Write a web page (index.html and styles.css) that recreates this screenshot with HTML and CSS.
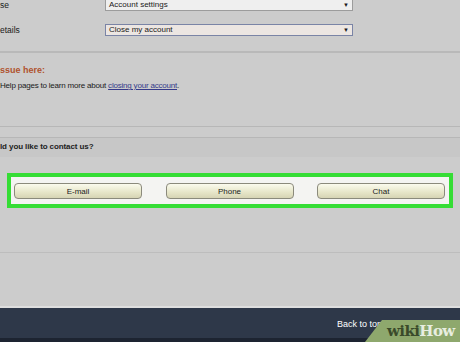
FILE: index.html
```html
<!DOCTYPE html>
<html>
  <head>
    <link rel="stylesheet" href="styles.css">
  </head>

  <body>
    <div class="fields">
      <div class="fieldrow first">
        <div class="fieldlabel">se</div>
        <div class="selectbox">Account settings<span class="arrow">&#9660;</span></div>
      </div>
      <div class="fieldrow">
        <div class="fieldlabel">etails</div>
        <div class="selectbox focused">Close my account<span class="arrow">&#9660;</span></div>
      </div>
    </div>

    <div class="divider"></div>

    <div class="helpbox">
      <div class="helptitle">ssue here:</div>
      <div class="helptext">Help pages to learn more about <a href="#" class="helplink">closing your account</a>.</div>
    </div>

    <div class="contact">
      <div class="contactbar">ld you like to contact us?</div>
    </div>

    <div class="choices">
      <button class="choicebtn">E-mail</button>
      <button class="choicebtn">Phone</button>
      <button class="choicebtn">Chat</button>
    </div>

    <div class="bottomline"></div>

    <div class="footer">
      <span class="backtotop">Back to top</span>
      <div class="wikilogo"><span class="wiki">wiki</span><span class="how">How</span></div>
    </div>
  </body>
</html>
```

FILE: styles.css
```css
body {
  font-family: "Liberation Sans", Arial, sans-serif;
  font-size: 8.5px;
  color: #1a1a1a;
  margin: 0;
  background-color: #cccccc;
  height: 342px;
  overflow: hidden;
  display: flex;
  flex-direction: column;
}

.fields {
  display: flex;
  flex-direction: column;
  gap: 13px;
}

.fieldrow {
  display: flex;
  align-items: center;
  height: 12px;
}

.fieldrow.first {
  margin-top: -1px;
}

.fieldlabel {
  width: 105px;
}

.selectbox {
  box-sizing: border-box;
  width: 248px;
  height: 12px;
  line-height: 10px;
  padding-left: 3px;
  font-size: 8px;
  background-color: #efefef;
  border: 1px solid #9c9c9c;
  display: flex;
  justify-content: space-between;
}

.selectbox.focused {
  border-color: #7a84a6;
  background-color: #ece6e2;
}

.arrow {
  font-size: 6px;
  padding-right: 3px;
}

.divider {
  margin-top: 15px;
  height: 2px;
  background-color: #b9b9b9;
}

.helpbox {
  margin-top: 11px;
}

.helptitle {
  color: #b0522e;
  font-weight: 700;
  font-size: 9px;
  line-height: 12px;
}

.helptext {
  margin-top: 4px;
  line-height: 12px;
  font-size: 8px;
  letter-spacing: -0.2px;
}

.helplink {
  color: #353a8a;
}

.contact {
  margin-top: 34px;
  border-top: 1px solid #b7b7b7;
  padding-top: 10px;
}

.contactbar {
  border-top: 1px solid #b7b7b7;
  background-color: #c7c7c7;
  height: 19px;
  line-height: 18px;
  font-weight: 700;
  font-size: 8px;
  letter-spacing: -0.1px;
  color: #222;
}

.choices {
  margin: 16px 7px 0 7px;
  border: 4px solid #35dd35;
  background-color: #f4f4f2;
  padding: 6px 4px 5px 3px;
  display: flex;
  justify-content: space-between;
}

.choicebtn {
  width: 128px;
  height: 16px;
  padding: 0;
  font-family: "Liberation Sans", Arial, sans-serif;
  font-size: 8px;
  color: #1a1a1a;
  border: 1px solid #8b8a7c;
  border-radius: 4px;
  background: linear-gradient(180deg, #fbfbee, #e6e5c8 60%, #d6d4b4);
}

.bottomline {
  margin-top: 44px;
  height: 1px;
  background-color: #bdbdbd;
}

.footer {
  margin-top: auto;
  height: 30px;
  border-top: 2px solid #dedede;
  border-bottom: 4px solid #1d2431;
  background-color: #2e3849;
  display: flex;
  align-items: center;
  position: relative;
}

.backtotop {
  color: #ffffff;
  font-size: 9px;
  padding-left: 337px;
  margin-top: 1px;
}

.wikilogo {
  position: absolute;
  right: 0;
  bottom: -4px;
  width: 73px;
  height: 22px;
  padding-left: 22px;
  background-color: #8ea86d;
  clip-path: polygon(17px 0, 100% 0, 100% 100%, 0 100%);
  font-family: "DejaVu Serif", "Liberation Serif", serif;
  font-weight: 700;
  font-size: 15px;
  line-height: 23px;
  letter-spacing: -0.6px;
}

.wiki {
  color: #3a4a2a;
}

.how {
  color: #e8eee0;
}
```
